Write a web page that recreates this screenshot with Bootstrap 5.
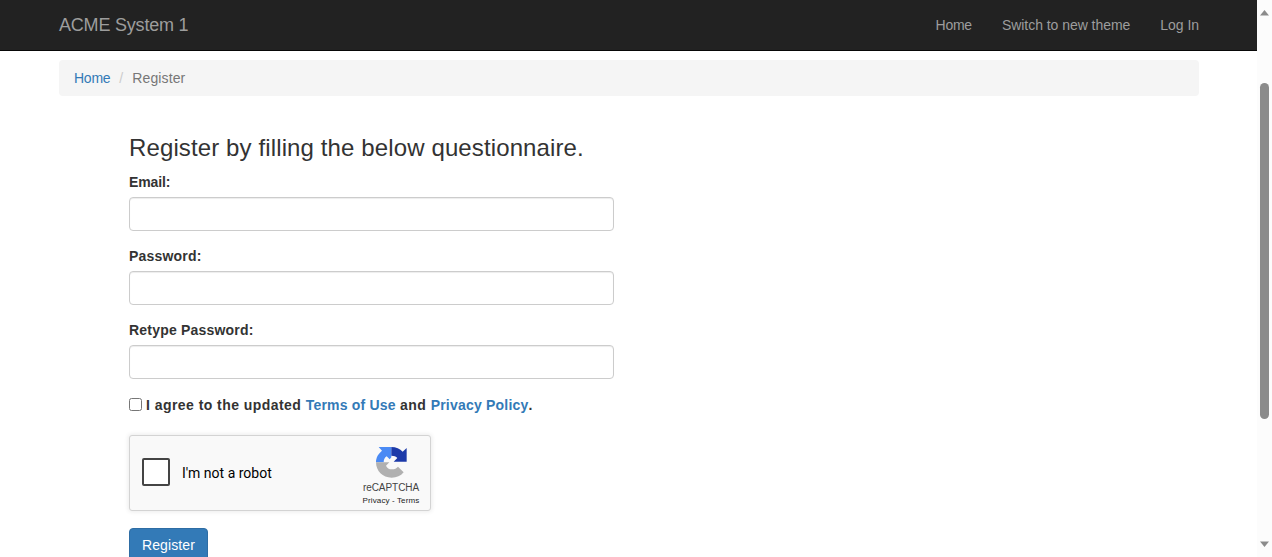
<!DOCTYPE html>
<html lang="en">
<head>
<meta charset="utf-8">
<meta name="viewport" content="width=device-width, initial-scale=1">
<title>Register - ACME System 1</title>
<link href="https://cdn.jsdelivr.net/npm/bootstrap@5.3.0/dist/css/bootstrap.min.css" rel="stylesheet">
<style>
body { font-family: "Liberation Sans", Arial, sans-serif; font-size: 14px; line-height: 20px; color: #333; background: #fff; }
a { color: #337ab7; text-decoration: none; }
.page-width { width: 1140px; margin-left: 59px; }
.site-nav { height: 51px; background: #222; border-bottom: 1px solid #080808; }
.site-nav .navbar-brand { font-size: 18px; line-height: 20px; color: #9d9d9d; letter-spacing: -.2px; }
.site-nav .nav-link { color: #9d9d9d; line-height: 20px; font-size: 14px; letter-spacing: -.04px; }
.site-nav .nav { gap: 30px; }
.site-nav .nav-link:first-child { letter-spacing: -.25px; }
.crumbs { height: 36px; margin-top: 9px; padding: 8px 15px; background: #f5f5f5; border-radius: 4px; --bs-breadcrumb-item-padding-x: 9px; --bs-breadcrumb-divider-color: #ccc; --bs-breadcrumb-item-active-color: #777; }
.crumbs a { letter-spacing: -.25px; }
.crumbs .active { letter-spacing: .1px; }
.register-form { width: 485px; margin-left: 129px; padding-top: 39px; }
.register-form h1 { font-size: 24px; line-height: 26px; font-weight: 400; margin: 0 0 11px; letter-spacing: .12px; }
.register-form label { font-weight: 700; line-height: 20px; letter-spacing: .2px; }
.register-form .form-control { height: 34px; border: 1px solid #ccc; border-radius: 4px; box-shadow: inset 0 1px 1px rgba(0,0,0,.075); }
.field { margin-bottom: 15px; }
.field label { display: block; margin-bottom: 5px; }
.field label[for="email"] { letter-spacing: -.1px; }
.agree { height: 20px; gap: 4px; margin-top: 16px; }
.agree label { letter-spacing: .45px; }
.agree label a { letter-spacing: .2px; }
.agree .form-check-input { width: 13px; height: 13px; margin: 0 0 2px; border: 1px solid #767676; border-radius: 2.5px; flex: none; }
.captcha { width: 302px; height: 76px; margin-top: 20px; padding-left: 12px; padding-right: 10px; background: #f9f9f9; border: 1px solid #d3d3d3; border-radius: 3px; box-shadow: 0 0 4px 1px rgba(0,0,0,.08); font-family: Roboto, sans-serif; color: #000; }
.captcha-box { width: 28px; height: 28px; border: 2px solid #444; border-radius: 2px; background: #fff; margin-top: -2px; }
.captcha-logo { width: 58px; color: #444; padding-top: 11px; }
.captcha-name { font: 10px/12px "Liberation Sans", sans-serif; margin-top: 4px; letter-spacing: -.05px; }
.captcha-links { font: 8px/10px "Liberation Sans", sans-serif; margin-top: 2px; letter-spacing: .12px; color: #222; }
.btn-register { height: 34px; margin-top: 17px; padding: 6px 12px; font-size: 14px; line-height: 20px; letter-spacing: .1px; color: #fff; background: #337ab7; border: 1px solid #2e6da4; border-radius: 4px; }
.scroll-track { width: 15px; background: #fcfcfc; padding: 10px 0; }
.scroll-thumb { width: 9px; height: 336px; margin-top: 67px; background: #8b8b8b; border-radius: 5px; }
</style>
</head>
<body>
<div class="d-flex vh-100 overflow-hidden">
  <div class="flex-grow-1 overflow-hidden">
    <nav class="site-nav">
      <div class="page-width d-flex justify-content-between align-items-center h-100">
        <a class="navbar-brand p-0 m-0" href="#">ACME System 1</a>
        <div class="nav">
          <a class="nav-link p-0" href="#">Home</a>
          <a class="nav-link p-0" href="#">Switch to new theme</a>
          <a class="nav-link p-0" href="#">Log In</a>
        </div>
      </div>
    </nav>
    <ol class="breadcrumb crumbs page-width mb-0">
      <li class="breadcrumb-item"><a href="#">Home</a></li>
      <li class="breadcrumb-item active">Register</li>
    </ol>
    <form class="register-form">
      <h1 class="text-nowrap">Register by filling the below questionnaire.</h1>
      <div class="field"><label for="email">Email:</label><input class="form-control" id="email" type="email"></div>
      <div class="field"><label for="pw">Password:</label><input class="form-control" id="pw" type="password"></div>
      <div class="field"><label for="pw2">Retype Password:</label><input class="form-control" id="pw2" type="password"></div>
      <div class="agree d-flex align-items-center text-nowrap">
        <input class="form-check-input" type="checkbox" id="agree">
        <label for="agree">I agree to the updated <a href="#">Terms of Use</a> and <a href="#">Privacy Policy</a>.</label>
      </div>
      <div class="captcha d-flex justify-content-between">
        <div class="d-flex align-items-center">
          <div class="captcha-box"></div>
          <span class="captcha-text ms-2 ps-1">I'm not a robot</span>
        </div>
        <div class="captcha-logo d-flex flex-column align-items-center text-nowrap">
          <svg width="31" height="31" viewBox="0 0 93 93" aria-hidden="true">
            <path fill="#4a8af4" d="M46 0H8l10 11C7 20 0 31 0 46h23c0-8 3-14 9-18l9 9 5-6z"/>
            <path fill="#1c3aa9" d="M46 0C60 0 72 5 80 14L92 3v41H53l11-11c-4-5-10-7-18-7z"/>
            <path fill="#b0b0b0" d="M0 46c0 26 20 46 47 46 15 0 27-5 36-16L66 59c-4 5-10 8-18 8-9 0-15-4-18-11l10-10z"/>
          </svg>
          <div class="captcha-name">reCAPTCHA</div>
          <div class="captcha-links">Privacy - Terms</div>
        </div>
      </div>
      <button class="btn btn-register" type="button">Register</button>
    </form>
  </div>
  <div class="scroll-track d-flex flex-column align-items-center flex-shrink-0">
    <svg width="9" height="6" viewBox="0 0 9 6"><path d="M4.5 0L9 5.5H0z" fill="#8b8b8b"/></svg>
    <div class="scroll-thumb"></div>
    <svg class="mt-auto" width="9" height="6" viewBox="0 0 9 6"><path d="M4.5 6L9 .5H0z" fill="#8b8b8b"/></svg>
  </div>
</div>
<script src="https://cdn.jsdelivr.net/npm/bootstrap@5.3.0/dist/js/bootstrap.bundle.min.js"></script>
</body>
</html>
